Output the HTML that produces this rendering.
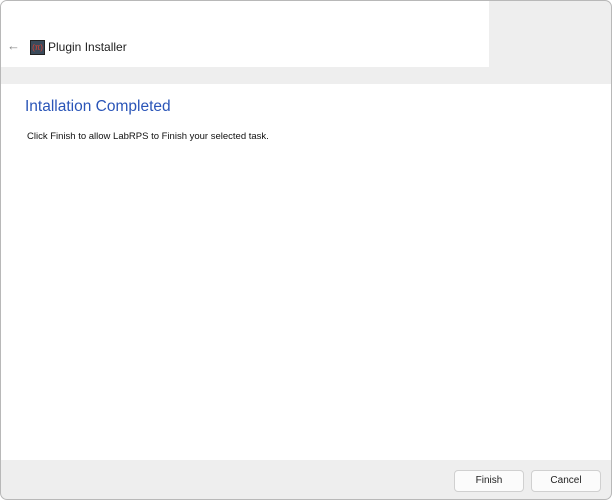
<!DOCTYPE html>
<html><head><style>
body{margin:0;width:612px;height:500px;overflow:hidden;background:#fff;font-family:"Segoe UI","Liberation Sans",sans-serif;}
.win{position:absolute;left:0;top:0;width:610px;height:498px;border:1px solid #b8b8b8;border-radius:7px;background:#eeeeee;overflow:hidden;}
.hdr{position:absolute;left:0;top:0;width:488px;height:66px;background:#fff;}
.back{position:absolute;left:6px;top:37px;color:#888;font-size:13px;}
.ico{position:absolute;left:29px;top:39px;width:13px;height:13px;background:#3a4a5a;border:1px solid #222;color:#e04030;font-size:8px;line-height:13px;text-align:center;}
.title{position:absolute;left:47px;top:39px;font-size:12px;color:#222;}
.content{position:absolute;left:0;top:83px;width:610px;height:376px;background:#fff;}
h1{position:absolute;left:24px;top:14px;margin:0;font-weight:normal;font-size:15.5px;color:#2a55b8;}
p{position:absolute;left:26px;top:47px;margin:0;font-size:9.5px;color:#111;}
.btn{position:absolute;top:469px;width:68px;height:20px;border:1px solid #d0d0d0;border-radius:4px;background:#fbfbfb;font-size:10px;line-height:20px;text-align:center;color:#222;}
</style></head><body>
<div class="win">
<div class="hdr"><span class="back">←</span><div class="ico">(π)</div><div class="title">Plugin Installer</div></div>
<div class="content"><h1>Intallation Completed</h1><p>Click Finish to allow LabRPS to Finish your selected task.</p></div>
<div class="btn" style="left:453px">Finish</div>
<div class="btn" style="left:530px">Cancel</div>
</div>
</body></html>
